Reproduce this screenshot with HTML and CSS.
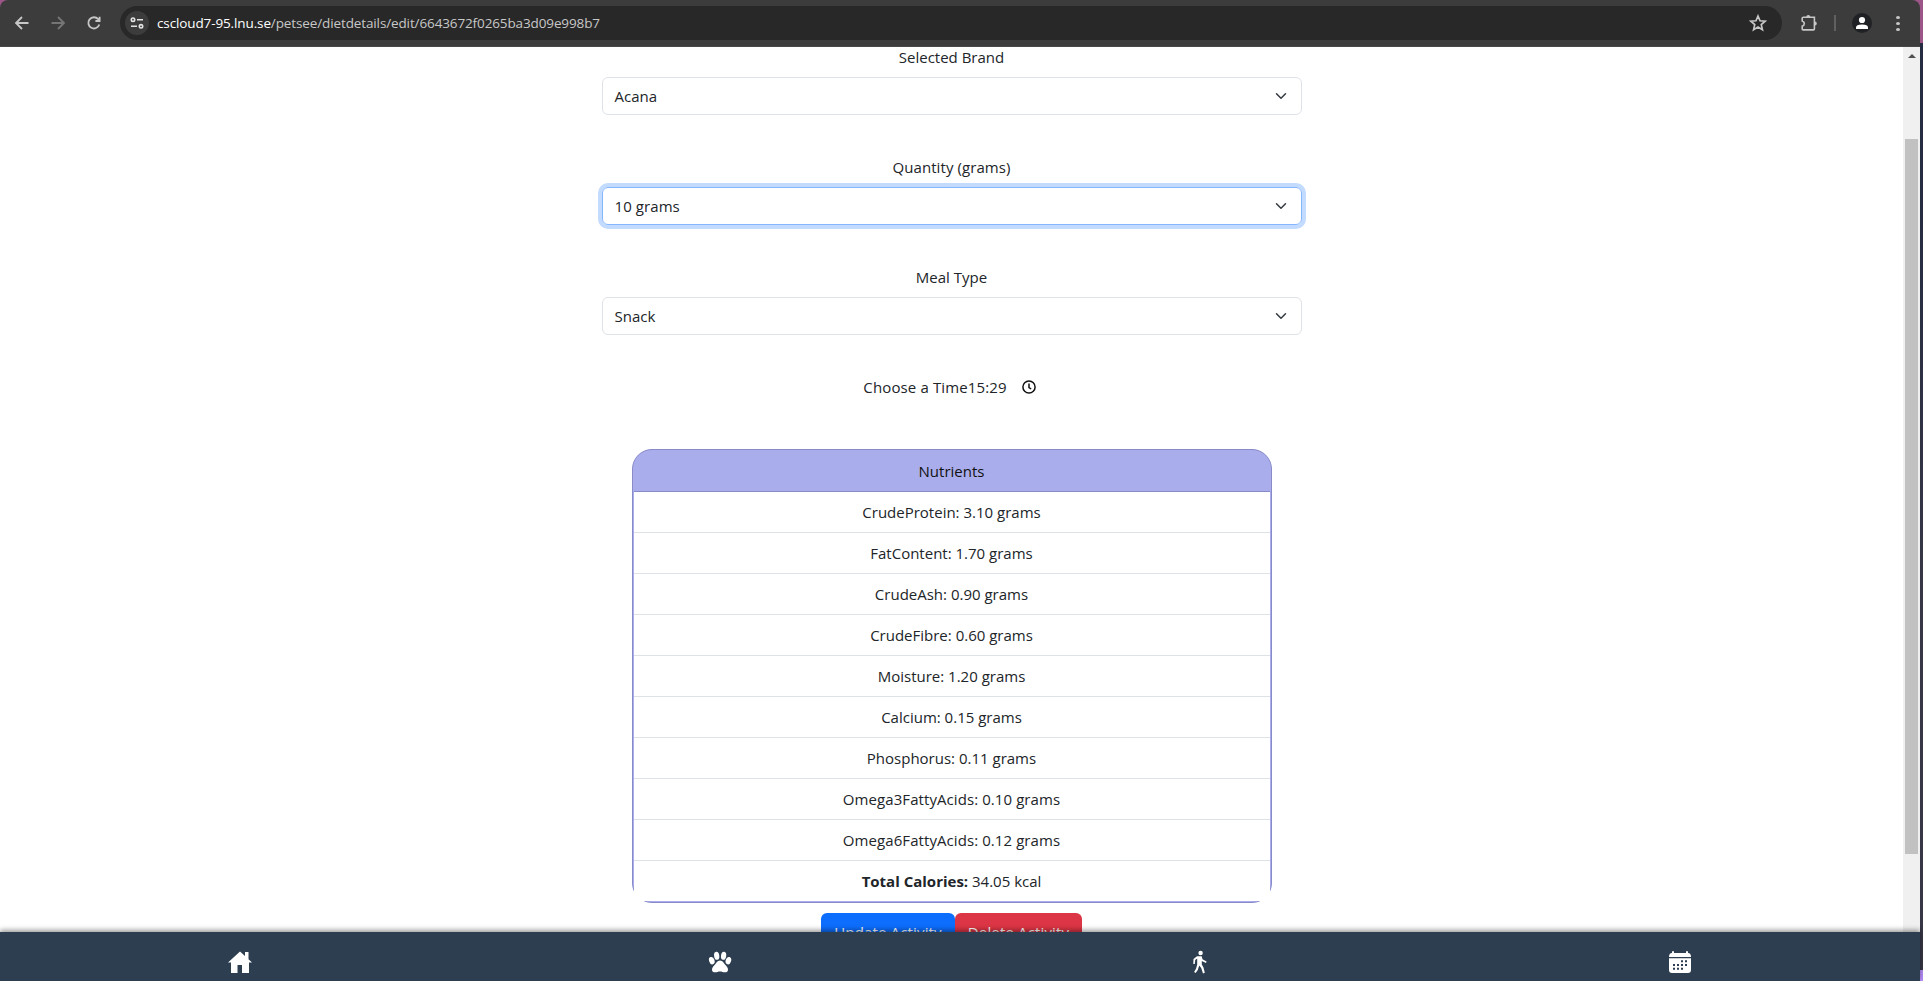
FILE: index.html
```html
<!DOCTYPE html>
<html lang="en">
<head>
<meta charset="utf-8">
<title>Petsee</title>
<link rel="stylesheet" href="styles.css">
</head>
<body>
<div class="window">
  <header class="toolbar">
    <svg class="ic back" viewBox="0 0 16 16"><path d="M14.5 8H2M8 2 2 8l6 6"/></svg>
    <svg class="ic forward" viewBox="0 0 16 16"><path d="M1.500 8H14M8 2l6 6-6 6"/></svg>
    <svg class="ic reload" viewBox="0 0 16 16"><path d="M13.300 9.500A5.600 5.600 0 1 1 12.200 4.200L13.400 5.600M13.600 1.800V6H9.400"/></svg>
    <div class="address">
      <span class="site"><svg viewBox="0 0 14 12"><circle cx="3" cy="2.700" r="1.700"/><path d="M7 2.700h6M1 9.300h6"/><circle cx="11" cy="9.300" r="1.700"/></svg></span>
      <span class="url"><b>cscloud7-95.lnu.se</b>/petsee/dietdetails/edit/6643672f0265ba3d09e998b7</span>
      <svg class="star" viewBox="0 0 16 16"><path d="M8 1.800l1.800 4.200 4.600.4-3.500 3 1.050 4.500L8 11.500l-3.950 2.400L5.100 9.400l-3.500-3 4.600-.4z"/></svg>
    </div>
    <svg class="puzzle" viewBox="0 0 18 18"><path d="M2.600 3.300H14.400V14.900q0 1-1 1H3.200q-1 0-1-1V12.200Q4.300 11.600 4.300 9.600T2.200 7V4.300q0-1 1-1z"/><path class="fill" d="M6.300 3a2 2 0 0 1 4 0zM14.800 7.600a2 2 0 0 1 0 4z"/></svg>
    <span class="divider"></span>
    <span class="profile"><svg viewBox="0 0 20 20"><circle cx="10" cy="7" r="3.100"/><path d="M4 16v-1.500q0-3 6-3t6 3V16z"/></svg></span>
    <span class="kebab"><i></i><i></i><i></i></span>
  </header>

  <div class="viewport">
    <main class="page">
      <div class="form">
        <div class="field"><label>Selected Brand</label><div class="select">Acana<svg viewBox="0 0 16 16"><path d="m2 5 6 6 6-6"/></svg></div></div>
        <div class="field"><label class="loose">Quantity (grams)</label><div class="select focus loose">10 grams<svg viewBox="0 0 16 16"><path d="m2 5 6 6 6-6"/></svg></div></div>
        <div class="field"><label>Meal Type</label><div class="select">Snack<svg viewBox="0 0 16 16"><path d="m2 5 6 6 6-6"/></svg></div></div>
        <div class="time"><span>Choose a Time15:29</span><svg viewBox="0 0 16 16"><circle cx="8" cy="8" r="6.100"/><path d="M8 4.500v4l2.200 1.500"/></svg></div>
      </div>
      <section class="card">
        <div class="card-head">Nutrients</div>
        <ul class="list">
          <li>CrudeProtein: 3.10 grams</li>
          <li>FatContent: 1.70 grams</li>
          <li>CrudeAsh: 0.90 grams</li>
          <li>CrudeFibre: 0.60 grams</li>
          <li>Moisture: 1.20 grams</li>
          <li>Calcium: 0.15 grams</li>
          <li>Phosphorus: 0.11 grams</li>
          <li class="loose">Omega3FattyAcids: 0.10 grams</li>
          <li class="loose">Omega6FattyAcids: 0.12 grams</li>
          <li><strong>Total Calories:</strong> 34.05 kcal</li>
        </ul>
      </section>
      <div class="actions"><button class="update">Update Activity</button><button class="delete">Delete Activity</button></div>
    </main>
    <div class="scrollbar"><span class="up"></span><span class="thumb"></span></div>
  </div>

  <nav class="nav">
    <a><svg viewBox="0 0 24 24"><path d="M12 1.500 0 12.500h3V23h6.500v-8h4.500v8H21V12.500h3L20.500 9.200V2H17v4z"/></svg></a>
    <a><svg viewBox="0 0 24 24"><ellipse cx="3.800" cy="10.700" rx="2.700" ry="3.800" transform="rotate(-18 3.800 10.700)"/><ellipse cx="8.700" cy="5.800" rx="2.600" ry="4" transform="rotate(-8 8.700 5.800)"/><ellipse cx="15.600" cy="5.800" rx="2.600" ry="4" transform="rotate(8 15.600 5.800)"/><ellipse cx="20.400" cy="10.700" rx="2.700" ry="3.800" transform="rotate(18 20.400 10.700)"/><path d="M12 10.500c2.500 0 3.600 2.300 5 4 1.600 1.700 3 3 3 5.200 0 2-1.400 2.600-3 2.600-2 0-3-.8-5-.8s-3 .8-5 .8c-1.600 0-3-.6-3-2.600 0-2.200 1.400-3.500 3-5.200 1.400-1.700 2.500-4 5-4z"/></svg></a>
    <a><svg viewBox="0 0 24 24"><circle cx="12.600" cy="3" r="2.200"/><path d="M9 6.200h4.700l.8 3 4.100 2.200-.6 1.500-4.200-1.800v3.400l1.700 3 1.300 5.300-1.800.6-1.800-5.300-2-2.600-1.400 4.400L7.600 23l-1.500-1 2-3.500 1.100-4V8.500L7.200 10l-.4 4H5.300l.2-4.900z"/></svg></a>
    <a><svg viewBox="0 0 24 24"><path d="M4 3V1.200h2V3h12V1.200h2V3q3 .2 3 4H1q0-3.800 3-4zM1 8.300h22V20q0 3-3 3H4q-3 0-3-3z"/><path class="dots" d="M13 11.300h2m2 0h2M5 15h2m2 0h2m2 0h2m2 0h2M5 18.700h2m2 0h2m2 0h2"/></svg></a>
  </nav>
</div>
</body>
</html>
```
FILE: styles.css
```css
* { box-sizing: border-box; }
body {
  margin: 0;
  height: 981px;
  overflow: hidden;
  background: linear-gradient(#9b5587 0 43px, #252b40 43px 180px, #363646 60%, #363646 970px, #b78cf8 970px);
  font: 15px/24px "Open Sans", "Noto Sans", sans-serif;
  color: #212529;
}
.window { width: 1920px; height: 981px; display: flex; flex-direction: column; }

.toolbar {
  height: 47px;
  flex: none;
  display: flex;
  align-items: center;
  background: #3c3c3c;
  border-bottom: 1px solid #474747;
  border-radius: 8px 8px 0 0;
  padding-left: 14px;
}
.ic { width: 16px; height: 16px; fill: none; stroke: #c7c7c7; stroke-width: 1.8; margin-right: 20px; }
.forward { stroke: #757575; }
.address {
  width: 1662px;
  height: 34px;
  border-radius: 17px;
  background: #282828;
  display: flex;
  align-items: center;
  padding-left: 5px;
  margin-left: -2px;
}
.site { width: 24px; height: 24px; border-radius: 50%; background: #3c3c3c; display: grid; place-items: center; }
.site svg { width: 14px; height: 12px; fill: none; stroke: #e3e3e3; stroke-width: 1.6; }
.url { margin-left: 8px; font-size: 13.500px; letter-spacing: -.12px; color: #c7c7c7; white-space: nowrap; }
.url b { font-weight: 400; color: #fff; }
.star { width: 18px; height: 18px; margin-left: auto; margin-right: 15px; fill: none; stroke: #c7c7c7; stroke-width: 1.500; }
.puzzle { width: 18px; height: 18px; margin-left: 18px; fill: none; stroke: #c7c7c7; stroke-width: 1.600; }
.puzzle .fill { fill: #c7c7c7; stroke: none; }
.divider { width: 2px; height: 16px; background: #606060; margin-left: 16px; }
.profile { width: 20px; height: 20px; border-radius: 50%; background: #202124; margin-left: 16px; }
.profile svg { display: block; fill: #fff; }
.kebab { display: grid; gap: 3px; margin-left: 24px; }
.kebab i { width: 4px; height: 3px; border-radius: 50%; background: #c7c7c7; }

.viewport { height: 885px; flex: none; display: flex; overflow: hidden; background: #fff; }
.page { width: 1903px; margin-top: -2px; display: flex; flex-direction: column; align-items: center; text-align: center; }
.form { width: 700px; }
.field { margin-bottom: 40px; }
label { display: block; margin-bottom: 8px; }
.loose { letter-spacing: .08px; }
.select {
  height: 38px;
  border: 1px solid #dee2e6;
  border-radius: 6px;
  display: flex;
  align-items: center;
  justify-content: space-between;
  padding: 0 12px;
}
.select svg { width: 16px; height: 12px; fill: none; stroke: #343a40; stroke-width: 2; stroke-linecap: round; stroke-linejoin: round; }
.focus { border-color: #86b7fe; box-shadow: 0 0 0 4px #c2dbfe; }
.time { height: 24px; display: flex; justify-content: center; align-items: center; padding-right: 3px; letter-spacing: .13px; }
.time svg { width: 16px; height: 16px; margin: 0 0 0 14px; fill: none; stroke: #111; stroke-width: 1.500; }

.card {
  width: 640px;
  margin-top: 50px;
  padding: 0 1px 1px;
  border: 1px solid #898bc9;
  border-radius: 20px;
  background: #a9adeb;
}
.card-head { height: 42px; line-height: 42px; border-bottom: 1px solid #898bc9; margin: 0; color: #111; }
.list { margin: 0; padding: 0; list-style: none; background: #fff; }
.list li { height: 41px; line-height: 40px; border-bottom: 1px solid #dee2e6; }
.list li:last-child { height: 40px; border: 0; }
.actions { display: flex; margin-top: 10px; }
.actions button { height: 38px; padding: 0; border: 0; border-radius: 6px; font: inherit; letter-spacing: .15px; color: #fff; }
.update { width: 134px; background: #0d6efd; }
.delete { width: 127px; background: #dc3545; }

.scrollbar { width: 17px; background: #f0f0f0; display: flex; flex-direction: column; align-items: center; }
.up { border: 4px solid transparent; border-top: 0; border-bottom-color: #505050; margin-top: 7px; }
.thumb { width: 13px; height: 715px; margin-top: 81px; background: #c1c1c1; }

.nav { height: 49px; flex: none; display: flex; background: #2c3e50; box-shadow: 0 -2px 5px rgba(0,0,0,.4); z-index: 1; }
.nav a { flex: 1; display: flex; justify-content: center; padding-top: 18px; }
.nav svg { width: 24px; height: 24px; fill: #fff; }
.nav .dots { stroke: #2c3e50; stroke-width: 2; fill: none; }
```
